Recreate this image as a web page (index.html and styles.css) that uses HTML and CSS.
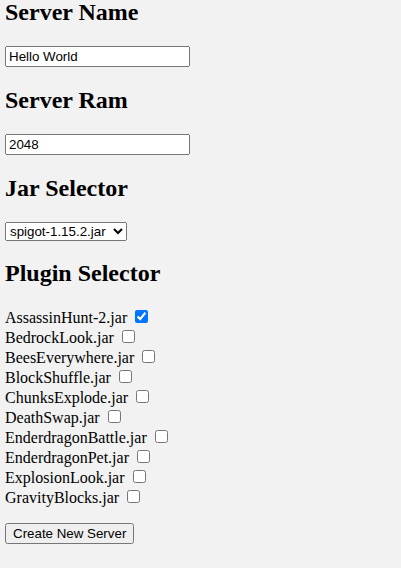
FILE: index.html
```html
<!DOCTYPE html>
<html>
<head>
<meta charset="utf-8">
<link rel="stylesheet" href="styles.css">
</head>
<body>
<form class="form">
<h2 class="title first">Server Name</h2>
<div class="field"><input class="text-input" type="text" value="Hello World"></div>
<h2 class="title">Server Ram</h2>
<div class="field"><input class="text-input" type="text" value="2048"></div>
<h2 class="title">Jar Selector</h2>
<div class="field"><select class="select"><option>spigot-1.15.2.jar</option></select></div>
<h2 class="title">Plugin Selector</h2>
<div class="plugins">
<div class="plugin">AssassinHunt-2.jar <input type="checkbox" checked></div>
<div class="plugin">BedrockLook.jar <input type="checkbox"></div>
<div class="plugin">BeesEverywhere.jar <input type="checkbox"></div>
<div class="plugin">BlockShuffle.jar <input type="checkbox"></div>
<div class="plugin">ChunksExplode.jar <input type="checkbox"></div>
<div class="plugin">DeathSwap.jar <input type="checkbox"></div>
<div class="plugin">EnderdragonBattle.jar <input type="checkbox"></div>
<div class="plugin">EnderdragonPet.jar <input type="checkbox"></div>
<div class="plugin">ExplosionLook.jar <input type="checkbox"></div>
<div class="plugin">GravityBlocks.jar <input type="checkbox"></div>
</div>
<div class="actions"><button class="button" type="button">Create New Server</button></div>
</form>
</body>
</html>
```
FILE: styles.css
```css
html {
  background: #f2f2f2;
}
body {
  margin: 0 5px;
  font-family: "Liberation Serif", serif;
  font-size: 16px;
  color: #000;
}
.title {
  font-size: 24px;
  font-weight: bold;
  margin: 19.92px 0;
}
.title.first {
  margin-top: -1px;
}
.text-input {
  font-family: "Liberation Sans", Arial, sans-serif;
  font-size: 13.33px;
  width: 185px;
  box-sizing: border-box;
  margin: 0;
}
.select {
  font-family: "Liberation Sans", Arial, sans-serif;
  font-size: 13.33px;
  width: 122px;
  margin: 0;
}
.plugins {
  margin: 0;
}
.actions {
  margin-top: 16px;
}
.button {
  font-family: "Liberation Sans", Arial, sans-serif;
  font-size: 13.33px;
  margin: 0;
}
```
